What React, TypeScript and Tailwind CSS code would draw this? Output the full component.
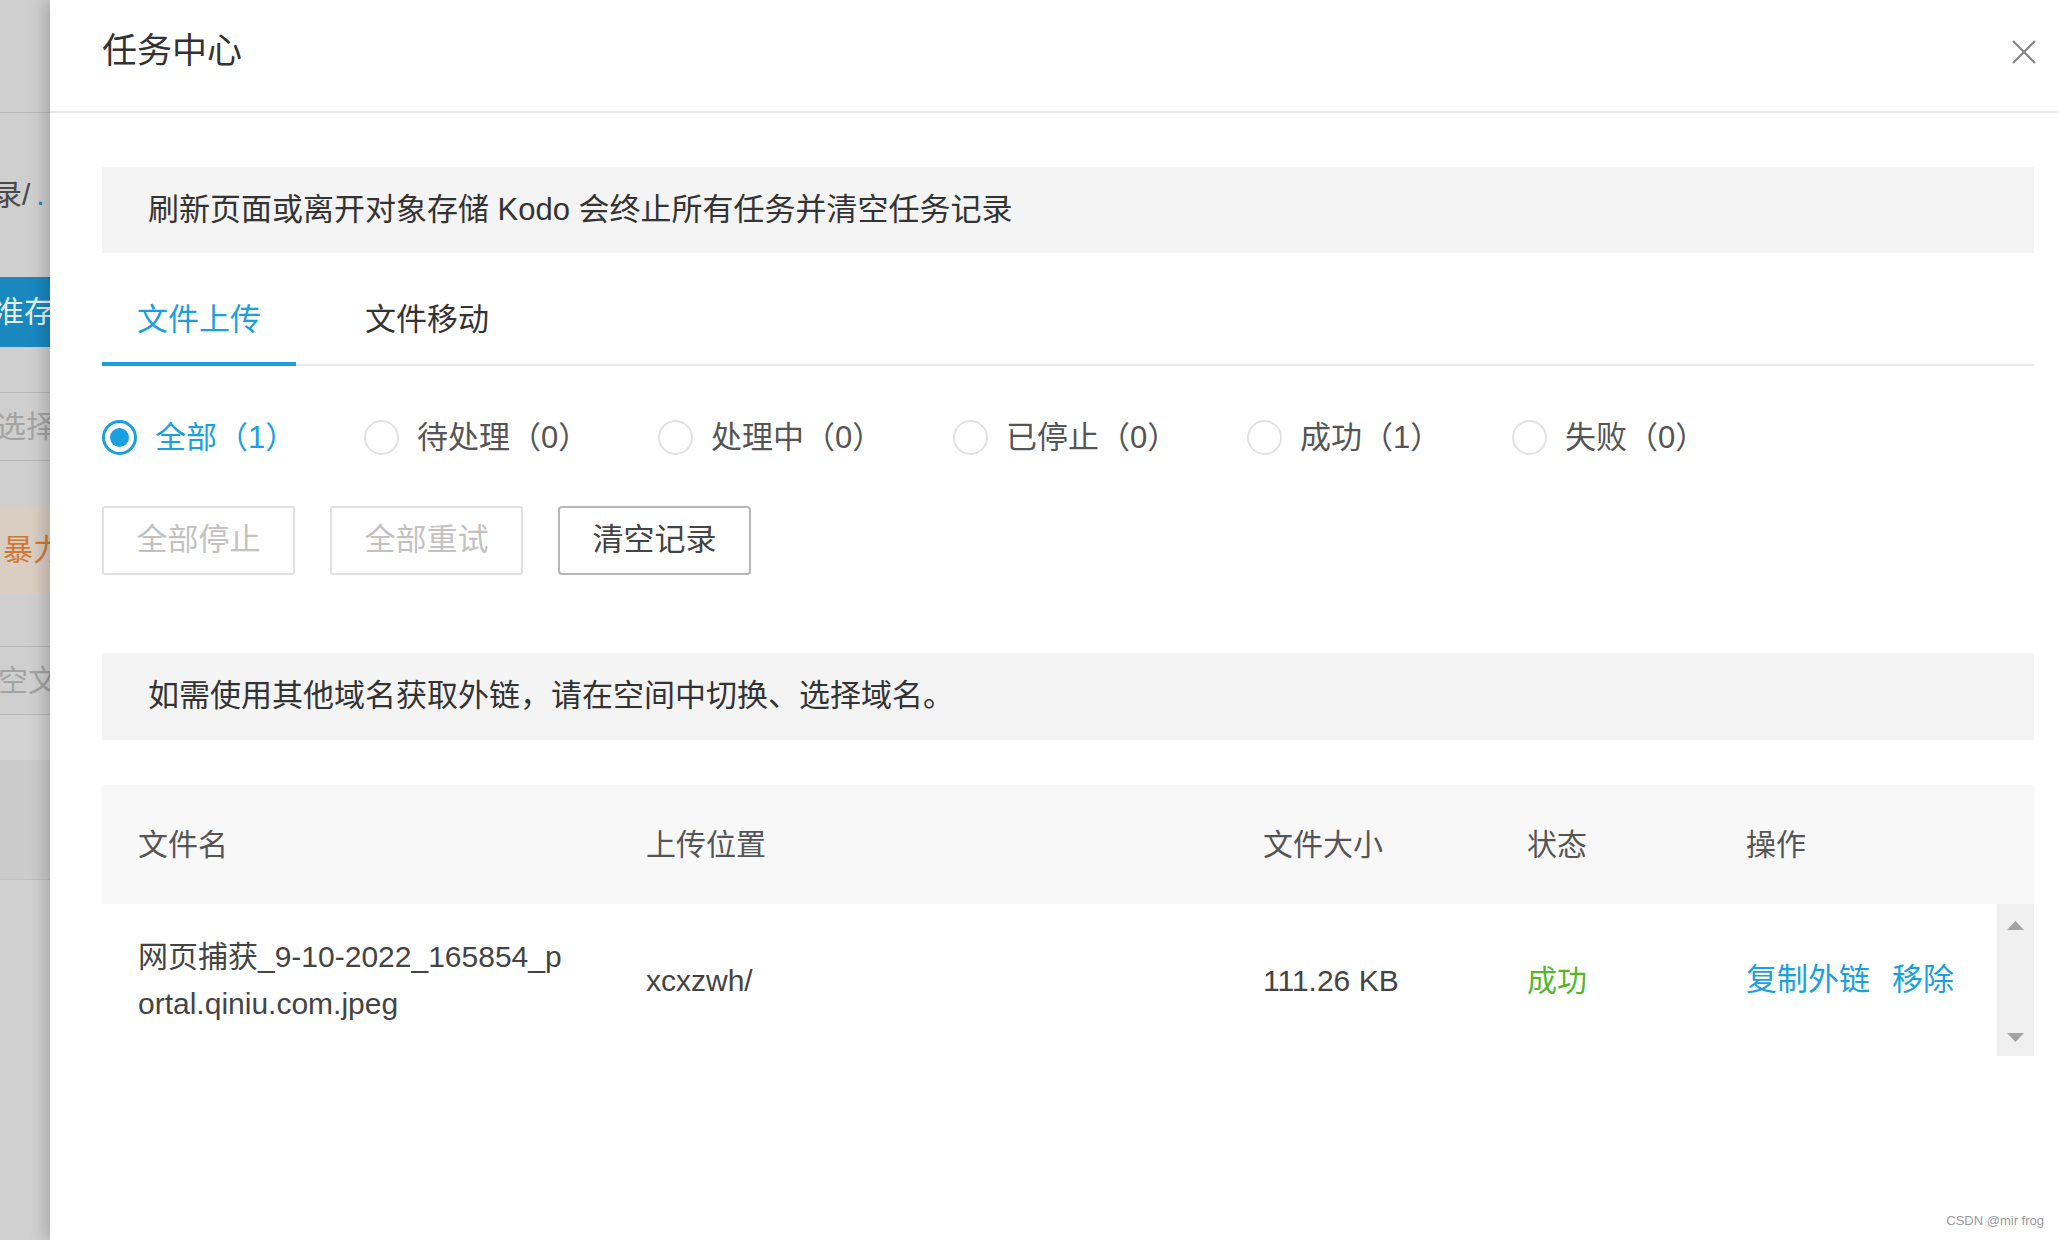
import React from "react";

const filters = [
  { label: "全部", count: 1, w: "w-[262px]", active: true },
  { label: "待处理", count: 0, w: "w-[294px]" },
  { label: "处理中", count: 0, w: "w-[295px]" },
  { label: "已停止", count: 0, w: "w-[294px]" },
  { label: "成功", count: 1, w: "w-[265px]" },
  { label: "失败", count: 0, w: "w-[200px]" },
];

function Backdrop() {
  return (
    <div className="relative w-[50px] shrink-0 overflow-hidden bg-[#cfcfcf] text-[30px] leading-none whitespace-nowrap">
      <div className="h-[113px] border-b border-[#b9b9b9]" />
      <div className="flex h-[164px] items-center">
        <span className="-ml-[8px] text-[#4a4a4a]">录/</span>
        <span className="ml-[6px] text-[#1f86b8]">.</span>
      </div>
      <div className="flex h-[70px] items-center bg-[#1888bf]">
        <span className="-ml-[6px] text-[#e6f1f7]">准存</span>
      </div>
      <div className="h-[46px] border-b border-[#b7b7b7]" />
      <div className="flex h-[68px] items-center border-b border-[#b7b7b7]">
        <span className="-ml-[4px] text-[#a3a3a3]">选择</span>
      </div>
      <div className="h-[45px]" />
      <div className="flex h-[88px] items-center bg-[#dacdc2]">
        <span className="ml-[3px] text-[#cd7a35]">暴力</span>
      </div>
      <div className="h-[53px] border-b border-[#b7b7b7]" />
      <div className="flex h-[68px] items-center border-b border-[#b7b7b7]">
        <span className="-ml-[2px] text-[#a3a3a3]">空文</span>
      </div>
      <div className="h-[45px] bg-[#d2d2d2]" />
      <div className="h-[120px] border-b border-[#bdbdbd] bg-[#cbcbcb]" />
      <div className="h-[360px] bg-[#d1d1d1]" />
    </div>
  );
}

function Radio({ active }: { active?: boolean }) {
  if (active) {
    return (
      <span className="flex h-[35px] w-[35px] shrink-0 items-center justify-center rounded-full border-[3px] border-[#1a9fe0]">
        <span className="h-[19px] w-[19px] rounded-full bg-[#1a9fe0]" />
      </span>
    );
  }
  return <span className="h-[35px] w-[35px] shrink-0 rounded-full border-2 border-[#e2e2e2]" />;
}

export default function App() {
  return (
    <div className="flex h-[1240px] w-[2059px] overflow-hidden bg-[#cfcfcf] font-['Liberation_Sans','Noto_Sans_CJK_SC',sans-serif]">
      <Backdrop />
      <div className="relative flex-1 bg-white shadow-[-6px_0_14px_rgba(0,0,0,0.18)]">
        {/* Header */}
        <div className="flex h-[113px] items-center justify-between border-b-2 border-[#e8e8e8] pl-[52px] pr-[22px]">
          <h1 className="-mt-[10px] text-[35px] leading-none text-[#333]">任务中心</h1>
          <svg width="26" height="26" viewBox="0 0 26 26" className="-mt-[8px]">
            <path d="M2 2 L24 24 M24 2 L2 24" stroke="#858585" strokeWidth="2.2" fill="none" />
          </svg>
        </div>

        <div className="pl-[52px] pr-[25px]">
          <div className="mt-[54px] flex h-[86px] items-center bg-[#f4f4f4] pl-[46px] text-[31px] text-[#333]">
            刷新页面或离开对象存储 Kodo 会终止所有任务并清空任务记录
          </div>

          {/* Tabs */}
          <div className="flex border-b-2 border-[#e8e8e8]">
            <div className="-mb-[2px] w-[194px] border-b-4 border-[#1a9fe0] pt-[44px] pb-[20px] text-center text-[31px] leading-[45px] text-[#1a9fe0]">
              文件上传
            </div>
            <div className="-mb-[2px] ml-[34px] w-[194px] border-b-4 border-transparent pt-[44px] pb-[20px] text-center text-[31px] leading-[45px] text-[#333]">
              文件移动
            </div>
          </div>

          {/* Status filters */}
          <div className="mt-[49px] flex h-[45px] items-center">
            {filters.map((f) => (
              <div key={f.label} className={`flex shrink-0 items-center ${f.w}`}>
                <Radio active={f.active} />
                <span
                  className={`ml-[18px] whitespace-nowrap text-[31px] leading-[45px] ${
                    f.active ? "text-[#1a9fe0]" : "text-[#555]"
                  }`}
                >
                  {f.label}（{f.count}）
                </span>
              </div>
            ))}
          </div>

          {/* Actions */}
          <div className="mt-[46px] flex gap-[35px]">
            <button className="h-[69px] w-[193px] rounded-[3px] border-2 border-[#e0e0e0] text-[31px] text-[#c2c2c2]">
              全部停止
            </button>
            <button className="h-[69px] w-[193px] rounded-[3px] border-2 border-[#e0e0e0] text-[31px] text-[#c2c2c2]">
              全部重试
            </button>
            <button className="h-[69px] w-[193px] rounded-[4px] border-2 border-[#b8b8b8] text-[31px] text-[#444]">
              清空记录
            </button>
          </div>

          <div className="mt-[78px] flex h-[87px] items-center bg-[#f4f4f4] pl-[46px] text-[31px] text-[#333]">
            如需使用其他域名获取外链，请在空间中切换、选择域名。
          </div>

          {/* Table */}
          <div className="mt-[45px] grid h-[119px] grid-cols-[508px_617px_264px_219px_1fr] items-center bg-[#f8f8f8] pl-[36px] text-[30px] text-[#555]">
            <div>文件名</div>
            <div>上传位置</div>
            <div>文件大小</div>
            <div>状态</div>
            <div>操作</div>
          </div>
          <div className="flex h-[152px]">
            <div className="grid flex-1 grid-cols-[508px_617px_264px_219px_1fr] items-center pl-[36px] text-[30px] text-[#444]">
              <div className="leading-[47px]">
                网页捕获_9-10-2022_165854_p
                <br />
                ortal.qiniu.com.jpeg
              </div>
              <div>xcxzwh/</div>
              <div>111.26 KB</div>
              <div className="text-[#52b82a]">成功</div>
              <div className="whitespace-nowrap text-[31px] text-[#1a9fe0]">
                <span>复制外链</span>
                <span className="ml-[22px]">移除</span>
              </div>
            </div>
            <div className="flex w-[37px] flex-col items-center justify-between bg-[#f0f0f0] pt-[17px] pb-[14px]">
              <svg width="17" height="9" viewBox="0 0 17 9">
                <path d="M8.5 0 L17 9 L0 9 Z" fill="#a3a3a3" />
              </svg>
              <svg width="17" height="9" viewBox="0 0 17 9">
                <path d="M0 0 L17 0 L8.5 9 Z" fill="#a3a3a3" />
              </svg>
            </div>
          </div>
        </div>

        <div className="absolute bottom-[10px] right-[15px] text-[13px] text-[#9a9a9a]">CSDN @mir frog</div>
      </div>
    </div>
  );
}
